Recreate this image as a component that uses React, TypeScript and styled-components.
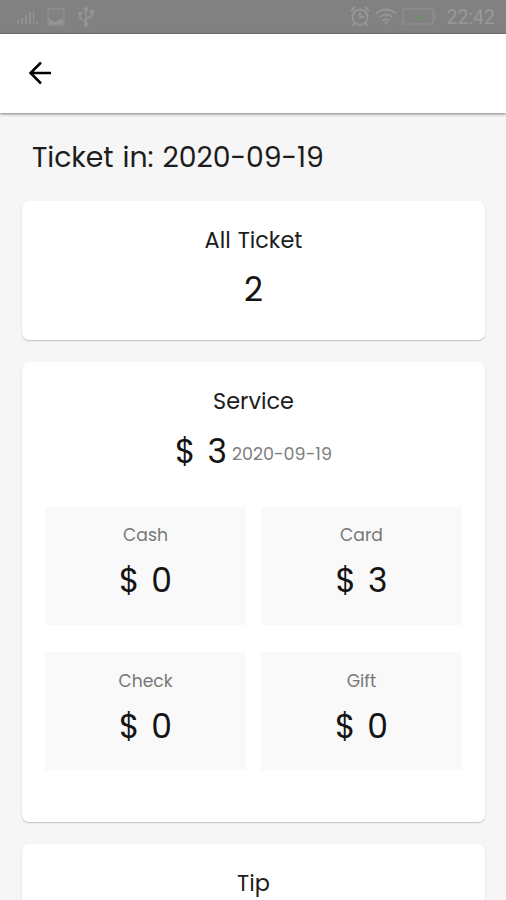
import React from "react";
import styled, { createGlobalStyle } from "styled-components";

const GlobalStyle = createGlobalStyle`
  * { box-sizing: border-box; }
  html, body { margin: 0; height: 900px; overflow: hidden; background: #f6f6f6; }
`;

const Screen = styled.div`
  width: 506px;
  height: 900px;
  overflow: hidden;
  background: #f6f6f6;
  color: #1d1d1d;
  font-family: Poppins, Inter, sans-serif;
`;

const StatusBar = styled.div`
  height: 34px;
  padding: 0 11px 0 16px;
  display: flex;
  align-items: center;
  justify-content: space-between;
  background: #818181;
  border-bottom: 1px solid #777;
  color: #999;
`;

const StatusGroup = styled.div<{ $gap: number }>`
  display: flex;
  align-items: center;
  gap: ${(p) => p.$gap}px;
`;

const Clock = styled.span`
  margin-left: 5px;
  padding-top: 3px;
  font: 19.5px/24px Roboto, sans-serif;
`;

const Header = styled.header`
  height: 79px;
  padding: 0 0 1px 24px;
  display: flex;
  align-items: center;
  background: #fff;
  box-shadow: 0 1px 3px rgba(0, 0, 0, 0.5);
`;

const BackButton = styled.button`
  width: 32px;
  height: 32px;
  padding: 0;
  border: 0;
  background: none;
  color: #000;
`;

const Content = styled.main`
  padding: 24px 21px 0 22px;
`;

const PageTitle = styled.h1`
  margin: 0 0 24px 10px;
  height: 40px;
  font-size: 28.3px;
  line-height: 40px;
  font-weight: 400;
  letter-spacing: -0.05px;
  word-spacing: 1.5px;
  white-space: nowrap;
`;

const Card = styled.section<{ $height: number }>`
  height: ${(p) => p.$height}px;
  margin-bottom: 22px;
  padding: 23px 23px 0;
  background: #fff;
  border-radius: 7px;
  box-shadow: 0 1px 1.5px rgba(0, 0, 0, 0.22);
  text-align: center;
`;

const CardTitle = styled.h2`
  margin: 0;
  font-size: 22.4px;
  line-height: 32px;
  font-weight: 400;
  word-spacing: 1px;
`;

const Amount = styled.div`
  font-size: 33px;
  line-height: 44px;
  color: #141414;
  word-spacing: 3px;
  white-space: pre;
`;

const TotalRow = styled.div`
  display: flex;
  justify-content: center;
  align-items: flex-end;
  gap: 5px;
  margin: 13px 0 33px;
`;

const DateNote = styled.span`
  margin-bottom: 8px;
  font-size: 17.5px;
  line-height: 24px;
  color: #808080;
`;

const Grid = styled.div`
  display: grid;
  grid-template-columns: 201px 201px;
  justify-content: space-between;
  row-gap: 27px;
`;

const Tile = styled.div`
  height: 118px;
  padding-top: 16px;
  background: #f9f9f9;

  &:nth-child(n + 3) {
    padding-top: 17px;
  }
`;

const TileLabel = styled.div`
  margin-bottom: 12px;
  font-size: 17.2px;
  line-height: 24px;
  color: #777;
`;

const CountRow = styled.div`
  margin-top: 12px;
`;

const tiles = [
  { label: "Cash", amount: 0 },
  { label: "Card", amount: 3 },
  { label: "Check", amount: 0 },
  { label: "Gift", amount: 0 },
];

const SignalIcon = () => (
  <svg width="23" height="17" viewBox="0 0 23 17" fill="#929292">
    <path d="M1 12h2v4H1zM5 10h2v6H5zM9 7h2v9H9zM13 4h2v12h-2zM17 2h1v14h-1zM20 14h2v2h-2z" />
  </svg>
);

const PictureIcon = () => (
  <svg width="18" height="18" viewBox="0 0 18 18" fill="none" stroke="#909090" strokeWidth="1.4">
    <path d="M1 1h16v16H1z" />
    <path d="M2 10l4 3 3 1 4-3 3 1v4H2z" fill="#959595" stroke="none" />
  </svg>
);

const UsbIcon = () => (
  <svg width="22" height="21" viewBox="-4 0 22 21" fill="none" stroke="#959595" strokeWidth="1.5">
    <path d="M9 19V2M6.5 4.5L9 1.5l2.5 3M9 16l-6-4V8M9 13l6-3V6" />
    <circle cx="9" cy="18.5" r="1.7" fill="#959595" />
    <circle cx="3" cy="7.5" r="1.2" fill="#959595" />
    <path d="M13.5 4.5h3v3h-3z" fill="#959595" />
  </svg>
);

const AlarmIcon = () => (
  <svg width="20" height="21" viewBox="0 0 20 21" fill="none" stroke="#979797" strokeWidth="1.9">
    <circle cx="10" cy="11" r="7.6" />
    <path d="M10 6.5V11h4M1 5l4-4M19 5l-4-4M4.5 17l-2 3M15.5 17l2 3" />
  </svg>
);

const WifiIcon = () => (
  <svg width="22" height="17" viewBox="0 0 22 17" fill="none" stroke="#979797" strokeWidth="1.8">
    <path d="M1 5.5Q11-2.5 21 5.5M4.5 9.3Q11 4 17.5 9.3M7.5 12.7Q11 10 14.5 12.7" />
    <circle cx="11" cy="15" r="1.3" fill="#979797" stroke="none" />
  </svg>
);

const BatteryIcon = () => (
  <svg width="34" height="17" viewBox="0 0 34 17" fill="none" stroke="#929292" strokeWidth="1.2">
    <path d="M1 1h30v15H1zM33 6v5" />
    <path d="M19 3.5l-6 5.5h3.5l-1 4.5 6-5.5h-3.5z" fill="#748c70" stroke="none" />
  </svg>
);

const ArrowIcon = () => (
  <svg width="32" height="32" viewBox="0 0 32 32" fill="none" stroke="currentColor" strokeWidth="2.5">
    <path d="M27 16H6.5M17 5.5L6.5 16 17 26.5" />
  </svg>
);

export default function App() {
  return (
    <>
      <GlobalStyle />
      <Screen>
        <StatusBar>
          <StatusGroup $gap={8}>
            <SignalIcon />
            <PictureIcon />
            <UsbIcon />
          </StatusGroup>
          <StatusGroup $gap={5}>
            <AlarmIcon />
            <WifiIcon />
            <BatteryIcon />
            <Clock>22:42</Clock>
          </StatusGroup>
        </StatusBar>
        <Header>
          <BackButton aria-label="Back">
            <ArrowIcon />
          </BackButton>
        </Header>
        <Content>
          <PageTitle>Ticket in: 2020-09-19</PageTitle>
          <Card $height={139}>
            <CardTitle>All Ticket</CardTitle>
            <CountRow>
              <Amount>2</Amount>
            </CountRow>
          </Card>
          <Card $height={460}>
            <CardTitle>Service</CardTitle>
            <TotalRow>
              <Amount>$ 3</Amount>
              <DateNote>2020-09-19</DateNote>
            </TotalRow>
            <Grid>
              {tiles.map((tile) => (
                <Tile key={tile.label}>
                  <TileLabel>{tile.label}</TileLabel>
                  <Amount>$ {tile.amount}</Amount>
                </Tile>
              ))}
            </Grid>
          </Card>
          <Card $height={139}>
            <CardTitle>Tip</CardTitle>
          </Card>
        </Content>
      </Screen>
    </>
  );
}
